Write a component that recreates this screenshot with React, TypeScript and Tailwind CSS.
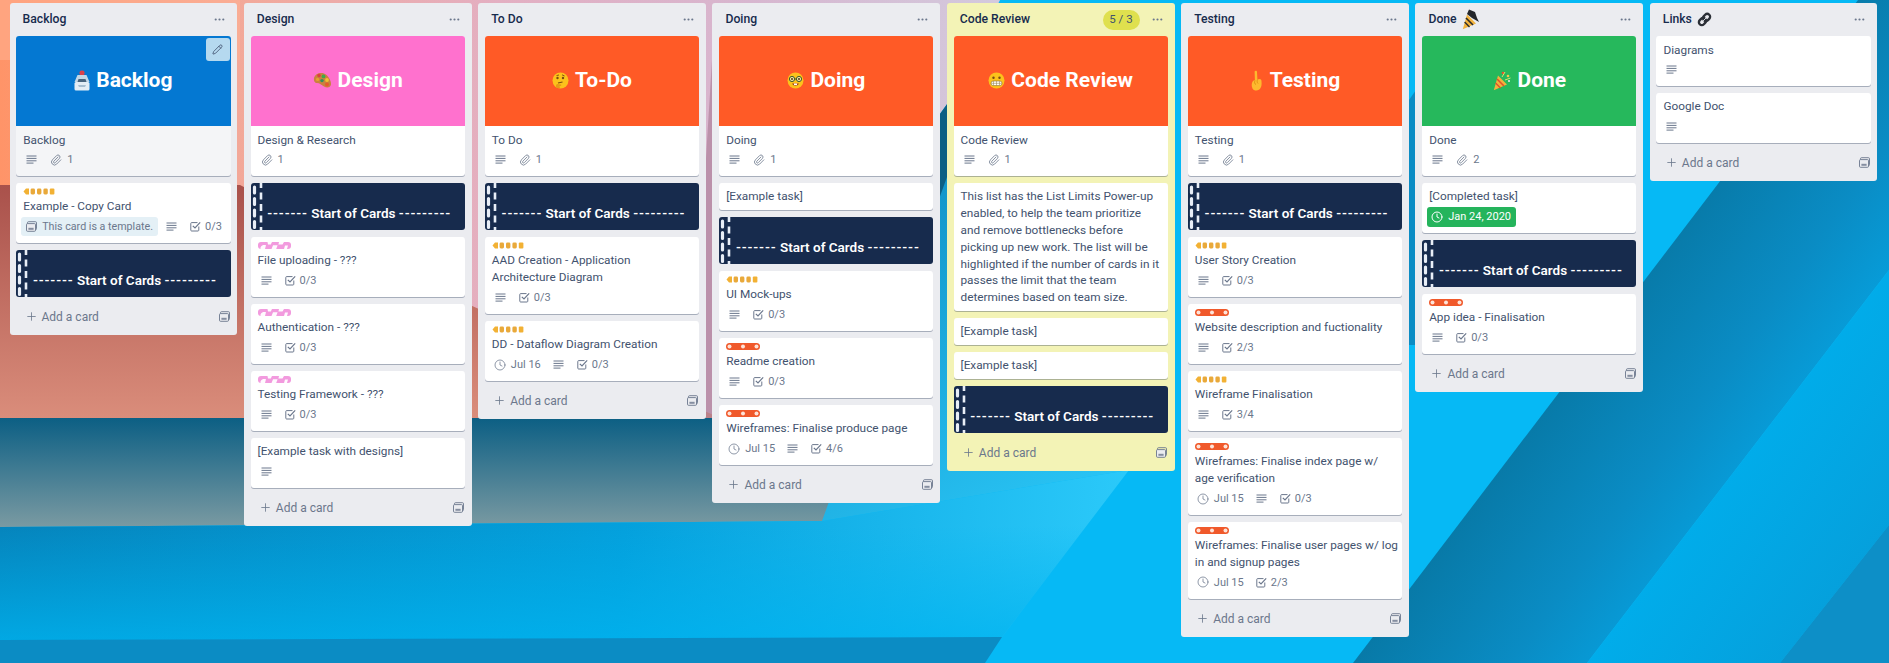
import React from "react";
import { Paperclip, Clock, Plus, Pencil, Ellipsis } from "lucide-react";

const DescIcon = () => (
  <svg width="11" height="9" viewBox="0 0 11 9" className="shrink-0">
    <path d="M0.5 1H10.5M0.5 3.4H10.5M0.5 5.8H10.5M0.5 8.1H7.5" stroke="#6b778c" strokeWidth="1" fill="none" />
  </svg>
);

const CheckIcon = () => (
  <svg width="11" height="11" viewBox="0 0 11 11" className="shrink-0">
    <path d="M8.8 5.5V9.2C8.8 9.7 8.4 10 8 10H1.6C1.1 10 0.8 9.7 0.8 9.2V2.4C0.8 1.9 1.1 1.6 1.6 1.6H7.5" fill="none" stroke="#6b778c" strokeWidth="1" />
    <path d="M2.8 4.8 5 7 10.2 1.4" fill="none" stroke="#6b778c" strokeWidth="1.2" />
  </svg>
);

const TemplateIcon = ({ color = "#6b778c" }: { color?: string }) => (
  <svg width="11" height="11" viewBox="0 0 11 11" className="shrink-0">
    <rect x="1.5" y="0.7" width="9" height="8" rx="1" fill="none" stroke={color} strokeWidth="0.9" />
    <rect x="0.5" y="2.6" width="9" height="7.7" rx="1" fill="#ebecf0" stroke={color} strokeWidth="0.9" />
    <rect x="2.4" y="6.8" width="5.2" height="2" fill={color} opacity="0.8" />
  </svg>
);

const YellowLabel = () => (
  <svg width="33" height="7" viewBox="0 0 33 7" className="block">
    <path d="M3 0.5H6V6.5H3L0.5 3.5Z" fill="#f2b134" />
    <rect x="7.6" y="0.5" width="4.4" height="6" rx="1.4" fill="#e9a93a" />
    <rect x="14" y="0.5" width="4.4" height="6" rx="1.4" fill="#e9a93a" />
    <rect x="20.4" y="0.5" width="4.4" height="6" rx="1.4" fill="#e9a93a" />
    <rect x="26.8" y="0.5" width="4.6" height="6" rx="1" fill="#f2b134" />
  </svg>
);

const PinkLabel = () => (
  <svg width="33" height="7" viewBox="0 0 33 7" className="block">
    <rect x="0" y="0" width="33" height="7" rx="3" fill="#f29ade" />
    <path d="M2.5 5.5C3.5 3 6 2.8 8 3.2L7 7H2.5ZM9.5 0H14L12.8 2.6H10ZM13.5 7 15 3.3H19.6L18.2 7ZM21 0H26L24.5 2.6H20.4ZM26 7 27 3.4H30L29 7Z" fill="#fff" opacity="0.95" />
  </svg>
);

const RedLabel = () => (
  <svg width="34" height="7" viewBox="0 0 34 7" className="block">
    <rect x="0" y="0" width="34" height="7" rx="3.5" fill="#f0592b" />
    <circle cx="3.5" cy="3.5" r="2" fill="#fde3d8" />
    <circle cx="17" cy="3.5" r="2" fill="#fde3d8" />
    <circle cx="30.5" cy="3.5" r="2" fill="#fde3d8" />
  </svg>
);

const Stripes = () => (
  <svg width="13" height="47" viewBox="0 0 13 47" className="absolute left-0 top-0">
    <path d="M3.5 4V46" stroke="#e8eef7" strokeWidth="3.2" strokeDasharray="6 5.5" strokeLinecap="round" fill="none" />
    <path d="M10 0V47" stroke="#e8eef7" strokeWidth="2.6" strokeDasharray="7 4.5" strokeDashoffset="2" fill="none" />
  </svg>
);

const Inbox = () => (
  <svg width="16" height="21" viewBox="0 0 16 21">
    <rect x="5.5" y="0.5" width="5" height="5" rx="2" fill="#d9414a" />
    <path d="M3.5 5H12.5L15.5 12H0.5Z" fill="#c3d7e6" />
    <path d="M4.5 9H11.5L12.5 12H3.5Z" fill="#47657e" />
    <rect x="0.5" y="12" width="15" height="8.5" rx="1.5" fill="#e2edf5" />
    <path d="M4 15H12L11 17H5Z" fill="#a7bfd1" />
  </svg>
);

const Palette = () => (
  <svg width="19" height="17" viewBox="0 0 19 17">
    <path d="M1 6C2 2 7 0 11 1.5C15 3 18.5 9 18 12.5C17.5 15.5 14 16.5 11 14.5C8 13 7 11 4 11C2 11 0.5 9 1 6Z" fill="#c9823f" />
    <circle cx="6" cy="3.6" r="1.8" fill="#dd3f3f" />
    <circle cx="10.5" cy="4.4" r="1.9" fill="#3fa94c" />
    <circle cx="14" cy="8" r="1.9" fill="#f2c230" />
    <circle cx="14" cy="12.5" r="1.9" fill="#e65a2c" />
    <circle cx="9" cy="8.6" r="1.7" fill="#2f8f60" />
    <circle cx="4.6" cy="7.4" r="1.6" fill="#e6a32d" />
  </svg>
);

const Face = ({ children }: { children: React.ReactNode }) => (
  <svg width="17" height="17" viewBox="0 0 17 17">
    <circle cx="8.5" cy="8.5" r="8" fill="#fcc21b" />
    {children}
  </svg>
);

const Thinking = () => (
  <Face>
    <circle cx="5.5" cy="6" r="1.2" fill="#7a4a14" />
    <circle cx="11" cy="6" r="1.2" fill="#7a4a14" />
    <path d="M4.5 3.6 7 3M10 2.8 12.6 4" stroke="#7a4a14" strokeWidth="0.9" fill="none" />
    <path d="M6 11 10.5 10" stroke="#7a4a14" strokeWidth="1.1" fill="none" />
    <path d="M4 16C3.5 13 4.5 11.5 6 12L9 12.5C10 13.5 8.5 14 7.5 14L8 16Z" fill="#e89b17" />
  </Face>
);

const Nerd = () => (
  <Face>
    <circle cx="5" cy="7" r="2.6" fill="#f7e7a0" stroke="#3f5a2f" strokeWidth="1" />
    <circle cx="12" cy="7" r="2.6" fill="#f7e7a0" stroke="#3f5a2f" strokeWidth="1" />
    <path d="M7.5 7H9.5" stroke="#3f5a2f" strokeWidth="1" />
    <circle cx="5" cy="7" r="0.9" fill="#3b2a14" />
    <circle cx="12" cy="7" r="0.9" fill="#3b2a14" />
    <path d="M5 11.5C6.5 14.5 10.5 14.5 12 11.5Z" fill="#a3411f" />
    <rect x="7" y="11.5" width="3" height="1.6" fill="#fff" />
  </Face>
);

const Grimace = () => (
  <Face>
    <circle cx="5.5" cy="5.8" r="1.2" fill="#7a4a14" />
    <circle cx="11.5" cy="5.8" r="1.2" fill="#7a4a14" />
    <rect x="3" y="9" width="11" height="4.6" rx="2.2" fill="#fff" stroke="#9b7a35" strokeWidth="0.7" />
    <path d="M5.5 9V13.6M8.5 9V13.6M11.5 9V13.6M3 11.3H14" stroke="#9b8a5a" strokeWidth="0.6" />
  </Face>
);

const Fingers = () => (
  <svg width="14" height="22" viewBox="0 0 14 22">
    <path d="M4.6 1.6C5 0.4 6.8 0.4 7 1.8L7.4 9.5L9.6 9C11 9 11.6 10 11.5 11.5C11.8 14 11.5 16.5 10.5 18C9.5 21 4 21.5 2.5 18.5C1.3 16 1.5 13 2.8 11.2C3.5 10.2 4.6 10 4.9 10.3Z" fill="#fdb92e" />
    <path d="M5 10.5C4.2 12 4.4 14 6 14.5M7.5 9.5C7 11 7 12.5 8 13.5" stroke="#dd8f12" strokeWidth="0.9" fill="none" />
  </svg>
);

const Popper = ({ dark }: { dark?: boolean }) => (
  <svg width="19" height="21" viewBox="0 0 19 21">
    <path d="M5 5.5 14 14.5 0.8 20.2Z" fill="#f2b33d" />
    <path d="M4 9 11 16" stroke={dark ? "#2b2b2b" : "#e0522c"} strokeWidth="1.6" />
    <path d="M2.6 13 7.5 18" stroke={dark ? "#2b2b2b" : "#e0522c"} strokeWidth="1.4" />
    {dark ? (
      <path d="M5 5 7 0.5 13 3 15 9 17 13 10 9Z" fill="#23262b" />
    ) : (
      <>
        <circle cx="10" cy="3" r="1.3" fill="#e0522c" />
        <circle cx="15" cy="6" r="1.3" fill="#f2c94c" />
        <circle cx="16" cy="11" r="1.1" fill="#e8e5e5" />
        <path d="M9 7 12 2M12 10 17.5 8" stroke="#d9e36a" strokeWidth="1" />
      </>
    )}
  </svg>
);

const LinkEmoji = () => (
  <svg width="15" height="15" viewBox="0 0 15 15">
    <g transform="rotate(-45 7.5 7.5)" fill="none" stroke="#2b2f36" strokeWidth="2.4">
      <rect x="0.8" y="4.6" width="7.6" height="5.8" rx="2.9" />
      <rect x="6.6" y="4.6" width="7.6" height="5.8" rx="2.9" />
    </g>
    <path d="M6 9 9 6" stroke="#cfd4da" strokeWidth="1" />
  </svg>
);

type CardT = {
  cover?: { color: string; emoji: React.ReactNode; text: string };
  label?: "y" | "p" | "r";
  title?: string;
  date?: string;
  done?: string;
  desc?: boolean;
  clip?: number;
  check?: string;
  template?: boolean;
  dark?: boolean;
  hover?: boolean;
  tight?: boolean;
};

const Badge = ({ children, className = "" }: { children: React.ReactNode; className?: string }) => (
  <span className={`flex items-center text-[11px] leading-[17px] text-[#6b778c] ${className}`}>{children}</span>
);

function Card({ c }: { c: CardT }) {
  if (c.dark) {
    return (
      <div className="relative h-[47px] shrink-0 overflow-hidden rounded-[3px] bg-[#172b4d] pt-[21.5px] pl-[3px] text-center text-[13.5px] font-semibold leading-[18px] whitespace-nowrap text-white">
        <Stripes />
        <span className="tracking-[0.85px]">-------</span> Start of Cards <span className="tracking-[0.85px]">---------</span>
      </div>
    );
  }
  const hasBadges = c.desc || c.clip || c.check || c.date || c.done || c.template;
  return (
    <div className={`relative shrink-0 overflow-hidden rounded-[3px] shadow-[0_1px_0_rgba(9,30,66,0.3)] ${c.hover ? "bg-[#f4f5f7]" : "bg-white"}`}>
      {c.cover && (
        <div className="flex h-[90px] items-center justify-center gap-[6px] pb-[1px] text-[21px] font-bold text-white" style={{ backgroundColor: c.cover.color }}>
          {c.cover.emoji}
          <span>{c.cover.text}</span>
        </div>
      )}
      {c.hover && (
        <div className="absolute right-[1px] top-[2px] flex h-[23px] w-[24px] items-center justify-center rounded-[3px] bg-[#b5d9ef]">
          <Pencil size={11} color="#42526e" strokeWidth={1.8} />
        </div>
      )}
      <div className={`pt-[5.5px] pb-[4.7px] pl-[7px] ${c.tight ? "pr-[3px]" : "pr-[7px]"}`}>
        {c.label && (
          <div className="mb-[2.5px] h-[7.5px]">
            {c.label === "y" ? <YellowLabel /> : c.label === "p" ? <PinkLabel /> : <RedLabel />}
          </div>
        )}
        <div className="text-[11.8px] leading-[16.8px] text-[#42526e]">{c.title}</div>
        {hasBadges && (
          <div className="flex h-[23px] items-center">
            {c.template && (
              <span className="mr-[8px] -ml-[2px] flex h-[19px] items-center gap-[5px] whitespace-nowrap rounded-[3px] bg-[#e4f0f6] pr-[5px] pl-[5px] text-[10.7px] text-[#6b778c]">
                <TemplateIcon />
                This card is a template.
              </span>
            )}
            {c.done && (
              <span className="-ml-[2px] flex h-[20px] items-center gap-[5px] rounded-[3px] bg-[#25b45c] pr-[5px] pl-[4px] text-[11px] text-white">
                <Clock size={12} strokeWidth={2} />
                {c.done}
              </span>
            )}
            {c.date && (
              <Badge className="mr-[12px] ml-[2px] gap-[5px]">
                <Clock size={12} strokeWidth={1.5} />
                {c.date}
              </Badge>
            )}
            {c.desc && (
              <span className={c.date ? "mr-[13px]" : c.template ? "mr-[13px]" : "mr-[13px] ml-[3px]"}>
                <DescIcon />
              </span>
            )}
            {c.clip && (
              <Badge className={`gap-[5px] ${c.desc ? "" : "ml-[3px]"}`}>
                <Paperclip size={12} strokeWidth={1.6} />
                {c.clip}
              </Badge>
            )}
            {c.check && (
              <Badge className={`gap-[4px] ${c.desc || c.date ? "" : "ml-[3px]"}`}>
                <CheckIcon />
                {c.check}
              </Badge>
            )}
          </div>
        )}
      </div>
    </div>
  );
}

type ListT = { title: React.ReactNode; limit?: string; yellow?: boolean; cards: CardT[] };

const orange = "#ff5a26";
const dark: CardT = { dark: true };
const lists: ListT[] = [
  {
    title: "Backlog",
    cards: [
      { cover: { color: "#0478d2", emoji: <Inbox />, text: "Backlog" }, title: "Backlog", desc: true, clip: 1, hover: true },
      { label: "y", title: "Example - Copy Card", template: true, desc: true, check: "0/3" },
      dark,
    ],
  },
  {
    title: "Design",
    cards: [
      { cover: { color: "#ff71ce", emoji: <Palette />, text: "Design" }, title: "Design & Research", clip: 1 },
      dark,
      { label: "p", title: "File uploading - ???", desc: true, check: "0/3" },
      { label: "p", title: "Authentication - ???", desc: true, check: "0/3" },
      { label: "p", title: "Testing Framework - ???", desc: true, check: "0/3" },
      { title: "[Example task with designs]", desc: true },
    ],
  },
  {
    title: "To Do",
    cards: [
      { cover: { color: orange, emoji: <Thinking />, text: "To-Do" }, title: "To Do", desc: true, clip: 1 },
      dark,
      { label: "y", title: "AAD Creation - Application Architecture Diagram", desc: true, check: "0/3" },
      { label: "y", title: "DD - Dataflow Diagram Creation", date: "Jul 16", desc: true, check: "0/3" },
    ],
  },
  {
    title: "Doing",
    cards: [
      { cover: { color: orange, emoji: <Nerd />, text: "Doing" }, title: "Doing", desc: true, clip: 1 },
      { title: "[Example task]" },
      dark,
      { label: "y", title: "UI Mock-ups", desc: true, check: "0/3" },
      { label: "r", title: "Readme creation", desc: true, check: "0/3" },
      { label: "r", title: "Wireframes: Finalise produce page", date: "Jul 15", desc: true, check: "4/6" },
    ],
  },
  {
    title: "Code Review",
    limit: "5 / 3",
    yellow: true,
    cards: [
      { cover: { color: orange, emoji: <Grimace />, text: "Code Review" }, title: "Code Review", desc: true, clip: 1 },
      { title: "This list has the List Limits Power-up enabled, to help the team prioritize and remove bottlenecks before picking up new work. The list will be highlighted if the number of cards in it passes the limit that the team determines based on team size." },
      { title: "[Example task]" },
      { title: "[Example task]" },
      dark,
    ],
  },
  {
    title: "Testing",
    cards: [
      { cover: { color: orange, emoji: <Fingers />, text: "Testing" }, title: "Testing", desc: true, clip: 1 },
      dark,
      { label: "y", title: "User Story Creation", desc: true, check: "0/3" },
      { label: "r", title: "Website description and fuctionality", desc: true, check: "2/3" },
      { label: "y", title: "Wireframe Finalisation", desc: true, check: "3/4" },
      { label: "r", title: "Wireframes: Finalise index page w/ age verification", date: "Jul 15", desc: true, check: "0/3" },
      { label: "r", title: "Wireframes: Finalise user pages w/ log in and signup pages", date: "Jul 15", check: "2/3", tight: true },
    ],
  },
  {
    title: (
      <span className="flex items-center gap-[5px]">
        Done <Popper dark />
      </span>
    ),
    cards: [
      { cover: { color: "#26b85c", emoji: <Popper />, text: "Done" }, title: "Done", desc: true, clip: 2 },
      { title: "[Completed task]", done: "Jan 24, 2020" },
      dark,
      { label: "r", title: "App idea - Finalisation", desc: true, check: "0/3" },
    ],
  },
  {
    title: (
      <span className="flex items-center gap-[5px]">
        Links <LinkEmoji />
      </span>
    ),
    cards: [
      { title: "Diagrams", desc: true },
      { title: "Google Doc", desc: true },
    ],
  },
];

function List({ l }: { l: ListT }) {
  return (
    <div className={`w-[227.7px] shrink-0 rounded-[3px] ${l.yellow ? "bg-[#f3f3b6]" : "bg-[#ebecf0]"}`}>
      <div className="flex h-[33px] items-center pr-[11px] pl-[13px] text-[12.2px] font-medium text-[#172b4d]">
        <div className="flex-1">{l.title}</div>
        {l.limit && (
          <span className="mr-[11px] flex h-[20px] w-[37px] items-center justify-center rounded-full bg-[#dfe04e] text-[11.5px] font-normal text-[#42526e]">
            {l.limit}
          </span>
        )}
        <Ellipsis size={13} color="#6b778c" strokeWidth={2} />
      </div>
      <div className="flex flex-col gap-[7px] px-[6.7px]">
        {l.cards.map((c, i) => (
          <Card key={i} c={c} />
        ))}
      </div>
      <div className="flex h-[38px] items-center pt-[2px] pr-[7.5px] pl-[15px] text-[12px] text-[#6b778c]">
        <Plus size={13} strokeWidth={1.5} />
        <span className="ml-[4px] flex-1">Add a card</span>
        <TemplateIcon />
      </div>
    </div>
  );
}

const Background = () => (
  <svg width="1889" height="663" viewBox="0 0 1889 663" className="absolute inset-0">
    <defs>
      <linearGradient id="warmTop" x1="0" x2="1" y1="0" y2="0">
        <stop offset="0" stopColor="#ff9468" />
        <stop offset="0.25" stopColor="#f2a99b" />
        <stop offset="0.5" stopColor="#e3afc2" />
        <stop offset="0.75" stopColor="#d7b6cf" />
        <stop offset="1" stopColor="#d3c9dd" />
      </linearGradient>
      <linearGradient id="warmLow" x1="0" x2="0" y1="0" y2="1">
        <stop offset="0" stopColor="#a9514b" />
        <stop offset="1" stopColor="#da8d7b" />
      </linearGradient>
      <linearGradient id="teal" gradientUnits="userSpaceOnUse" x1="0" x2="0" y1="418" y2="527">
        <stop offset="0" stopColor="#0c5f84" />
        <stop offset="1" stopColor="#7a9aa2" />
      </linearGradient>
      <linearGradient id="lowBlue" gradientUnits="userSpaceOnUse" x1="0" x2="1130" y1="530" y2="600">
        <stop offset="0" stopColor="#0584bc" />
        <stop offset="0.55" stopColor="#04a0dc" />
        <stop offset="1" stopColor="#2ccafa" />
      </linearGradient>
      <linearGradient id="lowFade" gradientUnits="userSpaceOnUse" x1="0" x2="0" y1="525" y2="640">
        <stop offset="0" stopColor="#00b4f0" stopOpacity="0" />
        <stop offset="1" stopColor="#00b4f0" stopOpacity="0.75" />
      </linearGradient>
      <linearGradient id="midBlue" gradientUnits="userSpaceOnUse" x1="900" x2="1130" y1="150" y2="520">
        <stop offset="0" stopColor="#0f8fc4" />
        <stop offset="1" stopColor="#2ccafa" />
      </linearGradient>
      <linearGradient id="dark1" gradientUnits="userSpaceOnUse" x1="1500" x2="1720" y1="400" y2="560">
        <stop offset="0" stopColor="#07749f" />
        <stop offset="0.6" stopColor="#0a8cc4" />
        <stop offset="1" stopColor="#06a2e0" />
      </linearGradient>
      <linearGradient id="band" gradientUnits="userSpaceOnUse" x1="1680" x2="1830" y1="500" y2="610">
        <stop offset="0" stopColor="#00aeec" />
        <stop offset="1" stopColor="#05a0dc" />
      </linearGradient>
    </defs>
    <rect width="1889" height="663" fill="#06b9f5" />
    <path d="M950 100 1100 100 1129 470 822 521Z" fill="url(#midBlue)" />
    <path d="M1416 90V345H1409V100Z" fill="#0b8cc4" />
    <path d="M0 0H1000L950 100 720 418H0Z" fill="url(#warmTop)" />
    <path d="M0 0H240V60H0Z" fill="#ffb192" opacity="0.55" />
    <path d="M0 185H240L470 305 720 418H0Z" fill="url(#warmLow)" />
    <path d="M712 60 725 60 725 418 690 418Z" fill="#a77a92" opacity="0.6" />
    <path d="M0 418H720L950 100 975 100 822 521 0 527Z" fill="url(#teal)" />
    <path d="M0 527 822 521 1129 470 1002 637 0 640Z" fill="url(#lowBlue)" />
    <path d="M0 527 822 521 1129 470 1002 637 0 640Z" fill="url(#lowFade)" />
    <path d="M0 640 1002 637 985 663H0Z" fill="#0b8cc4" />
    <path d="M1858 0H1889V270L1587 663H1353Z" fill="url(#dark1)" />
    <path d="M1889 270V525L1780 663H1587Z" fill="url(#band)" />
    <path d="M1889 525V663H1780Z" fill="#0d8fc7" />
  </svg>
);

export default function App() {
  return (
    <div className="relative h-[663px] w-[1889px] overflow-hidden font-['Roboto',sans-serif]">
      <Background />
      <div className="relative flex items-start gap-[6.65px] pt-[3px] pl-[9.5px]">
        {lists.map((l, i) => (
          <List key={i} l={l} />
        ))}
      </div>
    </div>
  );
}
